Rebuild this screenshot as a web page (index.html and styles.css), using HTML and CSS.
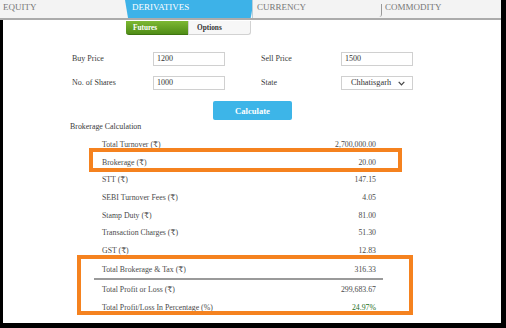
FILE: index.html
```html
<!DOCTYPE html>
<html>
<head>
<meta charset="utf-8">
<link rel="stylesheet" href="styles.css">
</head>
<body>
<div class="page">
  <nav class="tabs">
    <div class="tab tab-equity">EQUITY</div>
    <div class="tab tab-active">DERIVATIVES</div>
    <div class="tab tab-currency">CURRENCY</div>
    <div class="tab tab-commodity">COMMODITY</div>
  </nav>
  <main class="main">
    <div class="subtabs">
      <div class="subtab subtab-on">Futures</div>
      <div class="subtab subtab-off">Options</div>
    </div>
    <div class="form">
      <label class="flabel">Buy Price</label>
      <div class="field">1200</div>
      <label class="flabel">Sell Price</label>
      <div class="field">1500</div>
      <label class="flabel">No. of Shares</label>
      <div class="field">1000</div>
      <label class="flabel">State</label>
      <div class="field select">
        <span>Chhatisgarh</span>
        <svg class="chev" width="7" height="5" viewBox="0 0 7 5"><path d="M0.7 0.8 L3.5 3.8 L6.3 0.8" fill="none" stroke="#444" stroke-width="1.2"/></svg>
      </div>
    </div>
    <button class="calc">Calculate</button>
    <div class="section-title">Brokerage Calculation</div>
    <div class="results">
      <div class="row"><span>Total Turnover (₹)</span><span>2,700,000.00</span></div>
      <div class="row"><span>Brokerage (₹)</span><span>20.00</span></div>
      <div class="row"><span>STT (₹)</span><span>147.15</span></div>
      <div class="row"><span>SEBI Turnover Fees (₹)</span><span>4.05</span></div>
      <div class="row"><span>Stamp Duty (₹)</span><span>81.00</span></div>
      <div class="row"><span>Transaction Charges (₹)</span><span>51.30</span></div>
      <div class="row"><span>GST (₹)</span><span>12.83</span></div>
      <div class="row row-total"><span>Total Brokerage &amp; Tax (₹)</span><span>316.33</span></div>
      <div class="divider"></div>
      <div class="row"><span>Total Profit or Loss (₹)</span><span>299,683.67</span></div>
      <div class="row"><span>Total Profit/Loss In Percentage (%)</span><span class="pct">24.97%</span></div>
    </div>
  </main>
  <div class="mark mark-one"></div>
  <div class="mark mark-two"></div>
</div>
</body>
</html>
```
FILE: styles.css
```css
html, body {
  margin: 0;
  padding: 0;
}
body {
  background: #000;
  width: 506px;
  height: 328px;
  overflow: hidden;
  font-family: "Liberation Serif", "DejaVu Serif", serif;
}
.page {
  position: relative;
  width: 501px;
  height: 323px;
  background: #fff;
  overflow: hidden;
}
.tabs {
  display: flex;
  height: 18px;
  background: #f3f3f3;
  border-bottom: 2px solid #ababab;
}
.tab {
  position: relative;
  box-sizing: border-box;
  font-size: 9px;
  line-height: 15px;
  color: #777;
  height: 18px;
}
.tab-equity { width: 125px; padding-left: 3px; }
.tab-active {
  width: 127px;
  padding-left: 7px;
  color: #fff;
  background: #3db2e8;
  clip-path: polygon(0 0, 100% 0, 100% 60%, 99% 100%, 3px 100%);
}
.tab-currency {
  width: 127px;
  padding-left: 4px;
  border-left: 1px solid #b9cfdb;
}
.tab-commodity {
  width: 122px;
  padding-left: 6px;
}
.tab-commodity::before {
  content: "";
  position: absolute;
  left: 0;
  top: 4px;
  width: 2px;
  height: 13px;
  border-right: 1px solid #999;
  border-radius: 0 0 3px 0;
}
.main {
  border-left: 3px solid #000;
  height: 303px;
  box-sizing: border-box;
}
.subtabs {
  display: flex;
  margin-left: 123px;
  padding-top: 1px;
  height: 14px;
}
.subtab {
  box-sizing: border-box;
  height: 14px;
  font-size: 7.3px;
  font-weight: bold;
  line-height: 14px;
}
.subtab-on {
  width: 62px;
  padding-left: 7px;
  color: #fff;
  background: linear-gradient(#7db833, #4f8d16);
  border-bottom: 1px solid #3e7410;
  border-radius: 0 0 0 3px;
}
.subtab-off {
  width: 63px;
  padding-left: 8px;
  color: #333;
  background: #f7f7f7;
  border: 1px solid #d2d2d2;
  border-top: none;
  border-radius: 0 0 3px 0;
  line-height: 13px;
}
.form {
  display: grid;
  grid-template-columns: 81px 72px 36px 80px 72px;
  grid-template-rows: 14px 14px;
  row-gap: 10px;
  margin-top: 17px;
  margin-left: 69px;
}
.flabel {
  font-size: 8px;
  color: #3a3a3a;
  line-height: 14px;
}
.form .flabel:nth-of-type(2),
.form .flabel:nth-of-type(4) {
  grid-column: 4;
}
.field {
  box-sizing: border-box;
  border: 1px solid #d0d0d0;
  font-size: 8px;
  line-height: 12px;
  padding-left: 3px;
  color: #333;
  background: #fff;
}
.select {
  display: flex;
  align-items: center;
  justify-content: space-between;
  padding-left: 9px;
  padding-right: 7px;
  font-size: 8.3px;
}
.calc {
  display: block;
  margin: 11px 0 0 210px;
  width: 79px;
  height: 19px;
  padding: 0;
  border: none;
  border-radius: 2px;
  background: #3db5e8;
  color: #fff;
  font-family: "Liberation Serif", serif;
  font-weight: bold;
  font-size: 8.6px;
}
.section-title {
  margin: 1px 0 0 67px;
  font-size: 7.9px;
  line-height: 12px;
  color: #3a3a3a;
}
.results {
  margin: 3px 0 0 99px;
  width: 274px;
  font-size: 7.8px;
  color: #4a4a4a;
}
.row {
  display: flex;
  justify-content: space-between;
  align-items: center;
  height: 17.6px;
}
.row-total {
  margin-top: 2px;
  height: 16.5px;
}
.divider {
  margin-left: -8px;
  width: 289px;
  height: 2px;
  background: #9a9a9a;
}
.row-total + .divider + .row {
  margin-top: 1px;
}
.pct {
  color: #1d6e1d;
}
.mark {
  position: absolute;
  box-sizing: border-box;
  border: 4px solid #f5821f;
}
.mark-one {
  left: 89px;
  top: 148px;
  width: 313px;
  height: 24px;
}
.mark-two {
  left: 77px;
  top: 255px;
  width: 336px;
  height: 60px;
}
```
